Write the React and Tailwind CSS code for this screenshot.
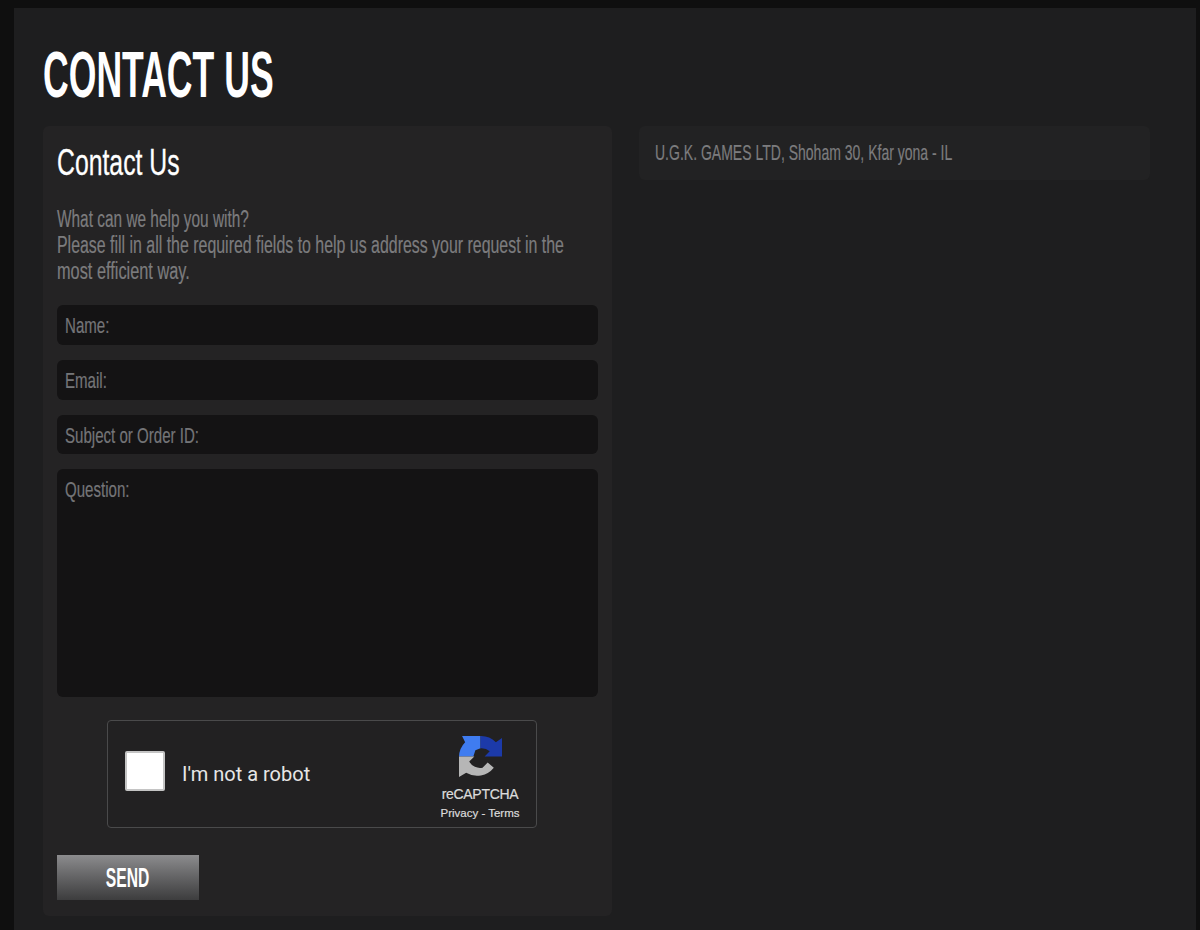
const cond = { fontFamily: '"Liberation Sans Narrow","Liberation Sans",sans-serif' };

function Line({ className = "", children }) {
  return <div className={"whitespace-nowrap origin-left " + className} style={cond}>{children}</div>;
}

function Field({ label, className }) {
  return (
    <div className={"bg-[#141314] rounded-md pl-2 pt-[9px] " + className}>
      <Line className="text-[22px] leading-[24px] text-[#747578] scale-x-[0.685] [-webkit-text-stroke:0.2px]">{label}</Line>
    </div>
  );
}

function Recaptcha() {
  return (
    <svg width="43" height="43" viewBox="0 0 42 42">
      <path d="M0 20 A21 21 0 0 1 6 6 L3 0 L21 0 L21 12 L16 14 L14 20 Z" fill="#3f7cf0" />
      <path d="M21 0 A21 21 0 0 1 36 6 L42 2 L42 20 L25 20 L30 15 A12 12 0 0 0 21 12 Z" fill="#1c3aa9" />
      <path d="M0 20 L15 20 L10 25 A12 12 0 0 0 23 31 L28 26 L34 31 A21 21 0 0 1 7 36 L0 40 Z" fill="#b6b6b6" />
    </svg>
  );
}

export default function App() {
  return (
    <div className="h-[930px] w-[1200px] overflow-hidden bg-[#0f0f0f] pt-2 pl-[14px] pr-1">
      <div className="h-full bg-[#1e1e1f] pl-[29px] pr-[46px]">
        <div className="h-[118px] pt-[29px]">
          <Line className="text-[64px] leading-[76px] font-bold text-white scale-x-[0.556]">CONTACT US</Line>
        </div>
        <div className="flex items-start gap-[27px]">
          <div className="w-[569px] h-[790px] bg-[#242324] rounded-md pl-[14px] pr-[14px]">
            <div className="h-[77px] pt-4">
              <Line className="text-[37px] leading-[42px] text-white scale-x-[0.67] [-webkit-text-stroke:0.3px]">Contact Us</Line>
            </div>
            <div className="text-[23px] leading-[26px] text-[#7c7c7e] pt-[3px] [-webkit-text-stroke:0.2px]">
              <Line className="scale-x-[0.67]">What can we help you with?</Line>
              <Line className="scale-x-[0.692]">Please fill in all the required fields to help us address your request in the</Line>
              <Line className="scale-x-[0.71]">most efficient way.</Line>
            </div>
            <div className="flex flex-col gap-[15px] mt-[21px]">
              <Field label="Name:" className="h-10" />
              <Field label="Email:" className="h-10" />
              <Field label="Subject or Order ID:" className="h-[39px]" />
              <Field label="Question:" className="h-[228px]" />
            </div>
            <div className="ml-[50px] mt-[23px] w-[430px] h-[108px] rounded-[4px] border border-[#4a4a4b] bg-[#222122] flex items-center relative">
              <div className="ml-[17px] mb-[7px] w-10 h-10 bg-white rounded-[2px] border-2 border-[#c4c4c4]" />
              <span className="ml-[17px] text-[20px] text-[#e6e6e6]" style={{ fontFamily: 'Roboto, sans-serif' }}>I'm not a robot</span>
              <div className="absolute left-[330px] top-[15px] w-[84px] flex flex-col items-center" style={{ fontFamily: '"Liberation Sans", sans-serif' }}>
                <Recaptcha />
                <span className="text-[14px] leading-[16px] mt-[7px] text-[#dcdcdc] tracking-[-0.3px] [-webkit-text-stroke:0.2px]">reCAPTCHA</span>
                <span className="text-[11.5px] leading-[14px] mt-[4px] text-[#dcdcdc] whitespace-nowrap [-webkit-text-stroke:0.2px]">Privacy - Terms</span>
              </div>
            </div>
            <div className="mt-[27px] w-[142px] h-[45px] bg-gradient-to-b from-[#8c8c8e] to-[#3d3d3e] flex items-center justify-center">
              <span className="text-[27px] font-bold text-white scale-x-[0.58] whitespace-nowrap translate-y-px" style={cond}>SEND</span>
            </div>
          </div>
          <div className="w-[511px] h-[54px] bg-[#222223] rounded-md pl-4 pt-[14px]">
            <Line className="text-[22px] leading-[26px] text-[#7c7c7e] scale-x-[0.637] [-webkit-text-stroke:0.2px]">U.G.K. GAMES LTD, Shoham 30, Kfar yona - IL</Line>
          </div>
        </div>
      </div>
    </div>
  );
}
